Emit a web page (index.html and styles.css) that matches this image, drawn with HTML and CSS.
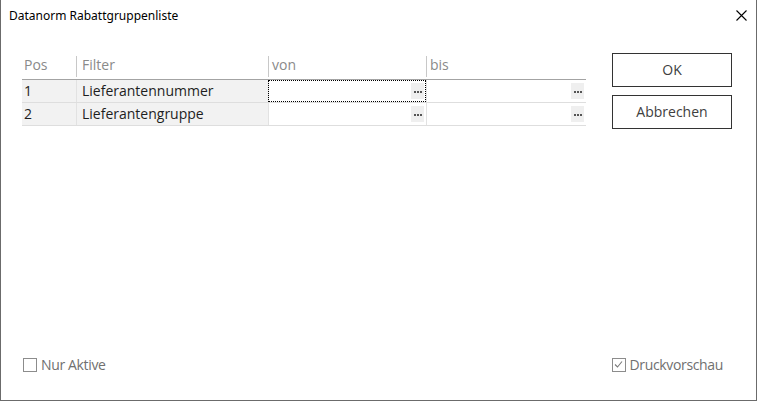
FILE: index.html
```html
<!DOCTYPE html>
<html lang="de">

<head>
  <meta charset="UTF-8">
  <title>Datanorm Rabattgruppenliste</title>
  <link rel="stylesheet" href="styles.css">
</head>

<body>

  <div class="window">
    <div class="titlebar">
      <span class="title">Datanorm Rabattgruppenliste</span>
      <svg class="close" width="11" height="11" viewBox="0 0 11 11">
        <path d="M0.5 0.5 L10.5 10.5 M10.5 0.5 L0.5 10.5" stroke="#000" stroke-width="1.1" fill="none" />
      </svg>
    </div>

    <div class="main">
      <div class="grid">
        <div class="row head">
          <span class="cell pos">Pos</span>
          <span class="cell filter">Filter</span>
          <span class="cell von">von</span>
          <span class="cell bis">bis</span>
        </div>
        <div class="row">
          <span class="cell pos">1</span>
          <span class="cell filter">Lieferantennummer</span>
          <span class="cell von edit focus"><i class="dots"><b></b><b></b><b></b></i></span>
          <span class="cell bis edit"><i class="dots"><b></b><b></b><b></b></i></span>
        </div>
        <div class="row">
          <span class="cell pos">2</span>
          <span class="cell filter">Lieferantengruppe</span>
          <span class="cell von edit"><i class="dots"><b></b><b></b><b></b></i></span>
          <span class="cell bis edit"><i class="dots"><b></b><b></b><b></b></i></span>
        </div>
      </div>

      <div class="buttons">
        <button class="btn">OK</button>
        <button class="btn">Abbrechen</button>
      </div>
    </div>

    <div class="footer">
      <label class="check"><span class="box"></span>Nur Aktive</label>
      <label class="check right"><span class="box checked">
          <svg width="11" height="11" viewBox="0 0 11 11">
            <path d="M2 5.5 L4.5 8 L9 2.5" stroke="#7a7a7a" stroke-width="1.1" fill="none" />
          </svg>
        </span>Druckvorschau</label>
    </div>
  </div>

</body>

</html>
```

FILE: styles.css
```css
* {
  margin: 0;
  padding: 0;
  box-sizing: border-box;
}

body {
  background: #fff;
  font-family: "Open Sans", "Noto Sans", sans-serif;
}

.window {
  width: 757px;
  height: 401px;
  border: 1px solid #6b6b6b;
  border-top: none;
  display: flex;
  flex-direction: column;
}

.titlebar {
  height: 32px;
  display: flex;
  align-items: center;
  justify-content: space-between;
  padding: 0 9px 2px 8px;
}

.title {
  font-family: "Noto Sans", sans-serif;
  font-size: 12px;
  color: #000;
}

.close {
  display: block;
}

.main {
  flex: 1;
  display: flex;
  padding: 21px 0 0 21px;
}

.grid {
  width: 564px;
  margin-top: 2px;
}

.row {
  display: flex;
  height: 23px;
  border-bottom: 1px solid #dedede;
  font-size: 14px;
  color: #1e1e1e;
}

.row .cell {
  padding-bottom: 1px;
}

.row.head {
  height: 25px;
  border-bottom: 1px solid #a3a3a3;
  color: #8a8a8a;
}

.cell {
  display: flex;
  align-items: center;
  white-space: nowrap;
}

.head .cell {
  border-left: 1px solid #c8c8c8;
  height: 21px;
  align-self: flex-start;
  margin-top: 1px;
  padding-bottom: 4px;
}

.head .pos {
  border-left: none;
}

.pos {
  width: 54px;
  padding-left: 2px;
  background: #f2f2f2;
}

.filter {
  width: 192px;
  padding-left: 5px;
  background: #f2f2f2;
  border-left: 1px solid #e2e2e2;
}

.von {
  width: 158px;
  padding-left: 3px;
  border-left: 1px solid #e2e2e2;
}

.bis {
  width: 160px;
  padding-left: 3px;
  border-left: 1px solid #e2e2e2;
}

.head .pos,
.head .filter {
  background: none;
}

.row .edit {
  justify-content: flex-end;
  padding: 0 2px 0 0;
}

.focus {
  outline: 1px dotted #000;
  outline-offset: -1px;
}

.dots {
  width: 13px;
  height: 16px;
  background: #efefef;
  display: flex;
  justify-content: center;
  align-items: center;
  gap: 1px;
  padding-top: 1px;
}

.dots b {
  width: 2px;
  height: 2px;
  background: #555;
}

.buttons {
  margin-left: 26px;
  display: flex;
  flex-direction: column;
  gap: 8px;
}

.btn {
  width: 120px;
  height: 34px;
  background: #fff;
  border: 1px solid #333;
  font-family: "Open Sans", "Noto Sans", sans-serif;
  font-size: 14px;
  color: #404040;
  padding-bottom: 2px;
}

.footer {
  height: 45px;
  display: flex;
  justify-content: space-between;
  align-items: flex-start;
  padding: 0 33px 0 22px;
}

.check {
  display: flex;
  align-items: center;
  font-size: 14px;
  letter-spacing: -0.35px;
  color: #707070;
  gap: 4px;
}

.box {
  width: 14px;
  height: 14px;
  border: 1px solid #8c8c8c;
  display: flex;
  align-items: center;
  justify-content: center;
}
```
